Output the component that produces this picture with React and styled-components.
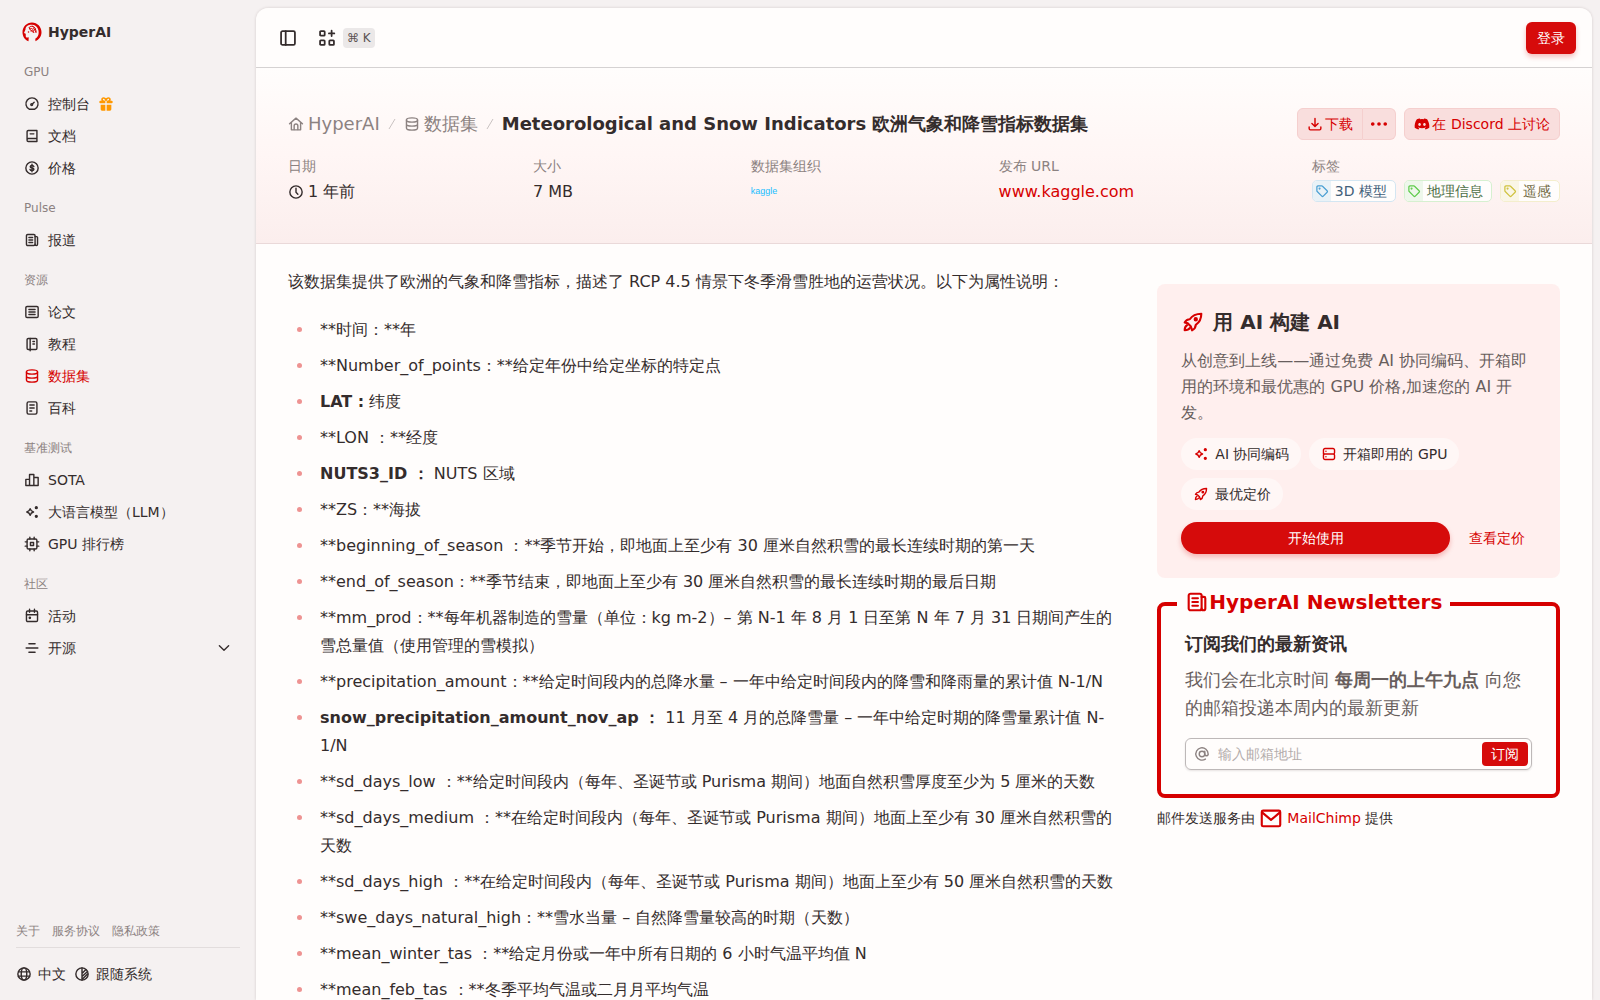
import React from 'react'
import styled, { createGlobalStyle } from 'styled-components'
import { FaDiscord } from 'react-icons/fa'

const GlobalStyle = createGlobalStyle`
    :root{
        --page:#f5f1f1;
        --panel:#fffdfc;
        --text:#342c2c;
        --muted:#8c8281;
        --soft:#685e5d;
        --red:#d60000;
        --button:#d60b0b;
        --tint:#ffefee;
    }
    *{
        box-sizing:border-box;
    }
    body{
        margin:0;
        background:var(--page);
        color:var(--text);
        font-family:"DejaVu Sans", sans-serif;
        font-size:14px;
        line-height:20px;
    }
    button, input{
        font:inherit;
    }
    a{
        color:inherit;
        text-decoration:none;
    }
`

const icons = {
    gauge: <><path d="M7.500 20.500a9.800 9.800 0 1 1 9 0z" /><circle cx="11.500" cy="13" r="1.500" /><path d="M13 11.500l2.500-2.500" /></>,
    book: <><path d="M4 18V5a2 2 0 0 1 2-2h14v18H6a2 2 0 0 1-2-2v-1a2 2 0 0 1 2-2h14" /><path d="M9 8.500h6" /></>,
    dollar: <><circle cx="12" cy="12" r="10" /><path d="M15 9.500c-.4-1.200-1.500-1.700-3-1.700-1.700 0-2.900.8-2.900 2.100 0 3 6 1.300 6 4.300 0 1.300-1.300 2.100-3.100 2.100-1.600 0-2.800-.6-3.200-1.900M12 5.800v12.400" /></>,
    news: <><rect x="3" y="3" width="14" height="18" rx="2" /><path d="M17 6.500h2.500a1.500 1.500 0 0 1 1.500 1.500v11a2 2 0 0 1-4 0M7 8h6M7 12h6M7 16h6" /></>,
    paper: <><rect x="2" y="3" width="20" height="18" rx="2" /><path d="M7 8h10M7 12h10M7 16h10" /></>,
    notebook: <><rect x="4" y="3" width="16" height="18" rx="2" /><path d="M9 3v20M13.500 8h2.500M13.500 12h2.500" /></>,
    database: <><ellipse cx="12" cy="5.500" rx="9" ry="3.500" /><path d="M3 5.500v13c0 2 4 3.500 9 3.500s9-1.500 9-3.500v-13M3 12c0 2 4 3.500 9 3.500s9-1.500 9-3.500" /></>,
    wiki: <><rect x="4" y="2" width="16" height="20" rx="2.500" /><path d="M8.500 7h7M8.500 12h7M8.500 17h3" /></>,
    bars: <path d="M2 11h6v10H2zM8 21V3h7v18zM15 8h7v13h-7" />,
    sparkles: <><path d="M9 6.500c.8 3.500 2 4.700 5.500 5.500-3.500.8-4.700 2-5.500 5.500-.8-3.500-2-4.700-5.500-5.500 3.500-.8 4.700-2 5.500-5.500z" /><circle cx="19" cy="5" r="1.500" fill="currentColor" /><circle cx="19" cy="19" r="1.500" fill="currentColor" /></>,
    chip: <><rect x="4" y="4" width="16" height="16" rx="2.500" /><rect x="9.500" y="9.500" width="5" height="5" /><path d="M8.500 1v3M15.500 1v3M8.500 20v3M15.500 20v3M1 8.500h3M1 15.500h3M20 8.500h3M20 15.500h3" /></>,
    calendar: <><rect x="3" y="4" width="18" height="17" rx="2" /><path d="M3 10h18M8 1v5M16 1v5" /><circle cx="8.500" cy="15" r="1" fill="currentColor" /></>,
    lines: <path d="M7 5h10M2.500 12h19M7 19h10" />,
    chevron: <path d="M4.500 8.500l7.500 7 7.500-7" />,
    globe: <><circle cx="12" cy="12" r="10" /><ellipse cx="12" cy="12" rx="4.500" ry="10" /><path d="M3 8.500h18M3 15.500h18" /></>,
    contrast: <><circle cx="12" cy="12" r="10" /><path d="M12 2v20M12 11l6-6M12 16l9-8M12 21l9-9" /></>,
    panel: <><rect x="3" y="3" width="18" height="18" rx="2" /><path d="M9 3v18" /></>,
    apps: <><rect x="3" y="3" width="6" height="6" rx="1" /><rect x="3" y="15" width="6" height="6" rx="1" /><rect x="15" y="15" width="6" height="6" rx="1" /><path d="M18 2.500v7M14.500 6h7" /></>,
    home: <><path d="M1.500 11.500L12 2.500l10.500 9M4.500 9.500V21.500h15V9.500" /><path d="M9 21v-6a3 3 0 0 1 6 0v6" /></>,
    clock: <><circle cx="12" cy="12" r="10" /><path d="M12 6v6.500l3 3" /></>,
    download: <path d="M12 3v12M7 11l5 5 5-5M2.500 17v2.500a2 2 0 0 0 2 2h15a2 2 0 0 0 2-2V17" />,
    more: <><circle cx="3" cy="12" r="1.500" fill="currentColor" /><circle cx="12" cy="12" r="1.500" fill="currentColor" /><circle cx="21" cy="12" r="1.500" fill="currentColor" /></>,
    tag: <><path d="M2.500 4.500a2 2 0 0 1 2-2h7a2 2 0 0 1 1.500.6l8.500 8.500a2 2 0 0 1 0 2.800L14.400 21.500a2 2 0 0 1-2.800 0l-8.500-8.500a2 2 0 0 1-.6-1.500z" /><circle cx="7.500" cy="7.500" r=".8" fill="currentColor" /></>,
    rocket: <><path d="M8.500 9C11.500 4.500 15.500 3 21 3c0 5-1.500 9-6 12-.2 3-1.300 4.800-4 6l-1.500-4.500-3-3L3 12.500C4 10.500 6 9 8.500 9z" /><circle cx="15" cy="9" r="1.200" fill="currentColor" /><path d="M5.500 15.500c-2 1-2.500 2.500-2.500 5.500 3-.2 4.500-.8 5.500-2.500" /></>,
    server: <><path d="M3 12V5.500A2.500 2.500 0 0 1 5.500 3h13A2.500 2.500 0 0 1 21 5.500v4.500a2 2 0 0 1-2 2H5a2 2 0 0 0-2 2v4.500A2.500 2.500 0 0 0 5.500 21h13a2.500 2.500 0 0 0 2.500-2.500V14a2 2 0 0 0-2-2H5a2 2 0 0 1-2-2" /><path d="M7 7.500h.1M7 16.500h.1" /></>,
    mail: <><rect x="2" y="4" width="20" height="17" rx="1.500" /><path d="M3 6.500l9 7.500 9-7.500" /></>,
    at: <><circle cx="12" cy="12" r="4.500" /><path d="M16.500 7.500V13a3 3 0 0 0 5.500 0v-1a10 10 0 1 0-4.500 8.300" /></>,
}

const Icon = ({ name, size = 16 }) => (
    <Glyph $size={size} viewBox="-1 -1 26 26" aria-hidden="true">{icons[name]}</Glyph>
)

const menu = [
    {
        title: 'GPU',
        items: [
            { icon: 'gauge', label: '控制台', gift: true },
            { icon: 'book', label: '文档' },
            { icon: 'dollar', label: '价格' },
        ],
    },
    { title: 'Pulse', items: [{ icon: 'news', label: '报道' }] },
    {
        title: '资源',
        items: [
            { icon: 'paper', label: '论文' },
            { icon: 'notebook', label: '教程' },
            { icon: 'database', label: '数据集', active: true },
            { icon: 'wiki', label: '百科' },
        ],
    },
    {
        title: '基准测试',
        items: [
            { icon: 'bars', label: 'SOTA' },
            { icon: 'sparkles', label: '大语言模型（LLM）' },
            { icon: 'chip', label: 'GPU 排行榜' },
        ],
    },
    {
        title: '社区',
        items: [
            { icon: 'calendar', label: '活动' },
            { icon: 'lines', label: '开源', more: true },
        ],
    },
]

const tags = [
    { label: '3D 模型', border: '#d3e6f2', tint: '#e9f2f7', icon: '#4a9fd3', color: '#42607a' },
    { label: '地理信息', border: '#d6f0d0', tint: '#eef7eb', icon: '#5ecb4b', color: '#4d6f46' },
    { label: '遥感', border: '#f4eecd', tint: '#faf6e6', icon: '#cfc23e', color: '#6f6840' },
]

const attributes = [
    '**时间：**年',
    '**Number_of_points：**给定年份中给定坐标的特定点',
    <><strong>LAT :</strong> 纬度</>,
    '**LON ：**经度',
    <><strong>NUTS3_ID ：</strong> NUTS 区域</>,
    '**ZS：**海拔',
    '**beginning_of_season ：**季节开始，即地面上至少有 30 厘米自然积雪的最长连续时期的第一天',
    '**end_of_season：**季节结束，即地面上至少有 30 厘米自然积雪的最长连续时期的最后日期',
    '**mm_prod：**每年机器制造的雪量（单位：kg m-2）– 第 N-1 年 8 月 1 日至第 N 年 7 月 31 日期间产生的雪总量值（使用管理的雪模拟）',
    '**precipitation_amount：**给定时间段内的总降水量 – 一年中给定时间段内的降雪和降雨量的累计值 N-1/N',
    <><strong>snow_precipitation_amount_nov_ap ：</strong> 11 月至 4 月的总降雪量 – 一年中给定时期的降雪量累计值 N-1/N</>,
    '**sd_days_low ：**给定时间段内（每年、圣诞节或 Purisma 期间）地面自然积雪厚度至少为 5 厘米的天数',
    '**sd_days_medium ：**在给定时间段内（每年、圣诞节或 Purisma 期间）地面上至少有 30 厘米自然积雪的天数',
    '**sd_days_high ：**在给定时间段内（每年、圣诞节或 Purisma 期间）地面上至少有 50 厘米自然积雪的天数',
    '**swe_days_natural_high：**雪水当量 – 自然降雪量较高的时期（天数）',
    '**mean_winter_tas ：**给定月份或一年中所有日期的 6 小时气温平均值 N',
    '**mean_feb_tas ：**冬季平均气温或二月月平均气温',
]

const Logo = () => (
    <LogoSvg viewBox="0 0 40 40" aria-hidden="true">
        <path fill="#d60000" d="M13 38.500C6 36 1 29 1 20.500 1 9.500 9.500 1 20 1s19 8.500 19 19.500c0 8-5 15-12 18l-.5-5c3-2 5.500-5 6.500-9 2-9-3-18-12.500-19C12 5 7 9 7 15l-3 7 3.500 1.500v5c0 2 1.500 3 4 2.500l2-.3z" />
        <path fill="none" stroke="#d60000" strokeWidth="2" d="M15 10c4-3 9-1 12 3M14 14c4-3 8 0 10 4M17 18c3-2 6 0 7 3M20 8c5 2 9 7 8 14M14 10c1 5 5 9 10 11M23 12l5 8" />
        <circle cx="13" cy="20" r="1.500" fill="#d60000" />
    </LogoSvg>
)

const Gift = () => (
    <GiftSvg viewBox="0 0 24 24" aria-hidden="true">
        <path d="M11 7V11H3.500A1.500 1.500 0 0 1 2 9.500v-1A1.500 1.500 0 0 1 3.500 7h1.800C3.500 3 7.500-.5 12 3.500 16.500-.5 20.500 3 18.700 7h1.800A1.500 1.500 0 0 1 22 8.500v1a1.500 1.500 0 0 1-1.500 1.500H13V7zM7.500 4.500C7 6 8 7 10.500 7 10.500 5 9 3.500 7.500 4.500zM16.500 4.500C15 3.500 13.500 5 13.500 7 16 7 17 6 16.500 4.500z" fillRule="evenodd" />
        <path d="M4 13h7v9H6a2 2 0 0 1-2-2zM13 13h7v7a2 2 0 0 1-2 2h-5z" />
    </GiftSvg>
)

const SideBar = () => (
    <Side>
        <Brand href="#"><Logo />HyperAI</Brand>
        <Menu>
            {menu.map(group => (
                <MenuGroup key={group.title}>
                    <MenuTitle>{group.title}</MenuTitle>
                    {group.items.map(item => (
                        <MenuItem key={item.label} href="#" $active={item.active}>
                            <Icon name={item.icon} />
                            <span>{item.label}</span>
                            {item.gift && <Gift />}
                            {item.more && <MenuMore><Icon name="chevron" /></MenuMore>}
                        </MenuItem>
                    ))}
                </MenuGroup>
            ))}
        </Menu>
        <SideLinks>
            <a href="#">关于</a>
            <a href="#">服务协议</a>
            <a href="#">隐私政策</a>
        </SideLinks>
        <SideSettings>
            <PlainButton><Icon name="globe" />中文</PlainButton>
            <PlainButton><Icon name="contrast" />跟随系统</PlainButton>
        </SideSettings>
    </Side>
)

const TopBar = () => (
    <Bar>
        <IconButton aria-label="Toggle sidebar"><Icon name="panel" size={20} /></IconButton>
        <IconButton aria-label="Command menu"><Icon name="apps" size={20} /><Kbd>⌘ K</Kbd></IconButton>
        <LoginButton>登录</LoginButton>
    </Bar>
)

const Slash = () => (
    <SlashSvg viewBox="0 0 8 12" aria-hidden="true"><path d="M1 11L7 1" /></SlashSvg>
)

const Hero = () => (
    <HeroBox>
        <HeroRow>
            <Crumbs aria-label="breadcrumb">
                <Crumb href="#"><Icon name="home" />HyperAI</Crumb>
                <Slash />
                <Crumb href="#"><Icon name="database" />数据集</Crumb>
                <Slash />
                <Title>Meteorological and Snow Indicators 欧洲气象和降雪指标数据集</Title>
            </Crumbs>
            <Actions>
                <ButtonGroup>
                    <SoftButton><Icon name="download" />下载</SoftButton>
                    <MoreButton aria-label="More"><Icon name="more" size={18} /></MoreButton>
                </ButtonGroup>
                <SoftButton><FaDiscord size={16} />在 Discord 上讨论</SoftButton>
            </Actions>
        </HeroRow>
        <Meta>
            <div><dt>日期</dt><dd><Icon name="clock" />1 年前</dd></div>
            <div><dt>大小</dt><dd>7 MB</dd></div>
            <div><dt>数据集组织</dt><dd><Kaggle>kaggle</Kaggle></dd></div>
            <div><dt>发布 URL</dt><dd><RedLink href="#">www.kaggle.com</RedLink></dd></div>
            <div>
                <dt>标签</dt>
                <TagList>
                    {tags.map(tag => (
                        <Tag key={tag.label} href="#" $tag={tag}>
                            <TagIcon $tag={tag}><Icon name="tag" size={14} /></TagIcon>
                            {tag.label}
                        </Tag>
                    ))}
                </TagList>
            </div>
        </Meta>
    </HeroBox>
)

const BuildCard = () => (
    <Card>
        <CardTitle><Icon name="rocket" size={24} />用 AI 构建 AI</CardTitle>
        <CardText>从创意到上线——通过免费 AI 协同编码、开箱即用的环境和最优惠的 GPU 价格,加速您的 AI 开发。</CardText>
        <Pills>
            <Pill><Icon name="sparkles" />AI 协同编码</Pill>
            <Pill><Icon name="server" />开箱即用的 GPU</Pill>
            <Pill><Icon name="rocket" />最优定价</Pill>
        </Pills>
        <CardActions>
            <StartButton>开始使用</StartButton>
            <PriceLink href="#">查看定价</PriceLink>
        </CardActions>
    </Card>
)

const Newsletter = () => (
    <form onSubmit={e => e.preventDefault()}>
        <Frame>
            <Legend><Icon name="news" size={24} />HyperAI Newsletters</Legend>
            <FrameTitle>订阅我们的最新资讯</FrameTitle>
            <FrameText>我们会在北京时间 <strong>每周一的上午九点</strong> 向您的邮箱投递本周内的最新更新</FrameText>
            <Field>
                <Icon name="at" />
                <EmailInput type="email" aria-label="输入邮箱地址" placeholder="输入邮箱地址" />
                <SubscribeButton>订阅</SubscribeButton>
            </Field>
        </Frame>
        <Provider>
            邮件发送服务由
            <MailLink href="#"><Icon name="mail" size={24} />MailChimp</MailLink>
            提供
        </Provider>
    </form>
)

const App = () => (
    <>
        <GlobalStyle />
        <Shell>
            <SideBar />
            <Main>
                <TopBar />
                <Hero />
                <Content>
                    <Article>
                        <p>该数据集提供了欧洲的气象和降雪指标，描述了 RCP 4.5 情景下冬季滑雪胜地的运营状况。以下为属性说明：</p>
                        <ul>
                            {attributes.map((item, i) => <li key={i}>{item}</li>)}
                        </ul>
                    </Article>
                    <Aside>
                        <BuildCard />
                        <Newsletter />
                    </Aside>
                </Content>
            </Main>
        </Shell>
    </>
)

export default App

const Glyph = styled.svg`
    width:${p => p.$size}px;
    height:${p => p.$size}px;
    flex:none;
    fill:none;
    stroke:currentColor;
    stroke-width:2.3;
    stroke-linecap:round;
    stroke-linejoin:round;
`
const Shell = styled.div`
    display:flex;
    height:100vh;
`

/* sidebar */
const Side = styled.aside`
    display:flex;
    flex-direction:column;
    flex:none;
    width:256px;
    padding:16px 16px 12px;
`
const Brand = styled.a`
    display:flex;
    align-items:center;
    gap:6px;
    height:32px;
    padding-left:6px;
    font-weight:bold;
`
const LogoSvg = styled.svg`
    width:20px;
    height:20px;
`
const GiftSvg = styled.svg`
    width:16px;
    height:16px;
    fill:#ff9800;
`
const Menu = styled.nav`
    display:flex;
    flex-direction:column;
    gap:8px;
    flex:1;
    padding-top:8px;
`
const MenuGroup = styled.div`
    display:flex;
    flex-direction:column;
`
const MenuTitle = styled.div`
    padding:0 8px;
    font-size:12px;
    line-height:32px;
    color:var(--muted);
`
const MenuItem = styled.a`
    display:flex;
    align-items:center;
    gap:8px;
    height:32px;
    padding:0 8px;
    color:${p => p.$active ? 'var(--red)' : 'inherit'};
`
const MenuMore = styled.span`
    display:flex;
    margin-left:auto;
`
const SideLinks = styled.div`
    display:flex;
    gap:12px;
    padding-bottom:6px;
    border-bottom:1px solid #e2dddd;
    font-size:12px;
    color:var(--muted);
`
const SideSettings = styled.div`
    display:flex;
    gap:8px;
    padding-top:12px;
`
const PlainButton = styled.button`
    display:flex;
    align-items:center;
    gap:6px;
    height:28px;
    padding:0;
    border:0;
    background:none;
    color:inherit;
`

/* panel */
const Main = styled.main`
    flex:1;
    min-width:0;
    margin:8px 8px 0 0;
    overflow:auto;
    scrollbar-width:none;
    border-radius:12px 12px 0 0;
    background:var(--panel);
    box-shadow:0 0 3px rgba(60,40,40,.18);
`
const Bar = styled.header`
    display:flex;
    align-items:center;
    gap:7px;
    height:60px;
    padding:0 16px;
    border-bottom:1px solid #d5d2d2;
`
const IconButton = styled.button`
    display:flex;
    align-items:center;
    gap:6px;
    padding:6px;
    border:0;
    background:none;
    color:inherit;
`
const Kbd = styled.kbd`
    padding:0 4px;
    border-radius:4px;
    background:#ebe8e8;
    font-family:inherit;
    font-size:12px;
    line-height:20px;
    color:#5c5353;
`
const SolidButton = styled.button`
    border:0;
    background:var(--button);
    color:#fff;
`
const LoginButton = styled(SolidButton)`
    height:32px;
    margin-left:auto;
    padding:0 11px;
    border-radius:6px;
    box-shadow:0 3px 5px rgba(214,11,11,.25);
`
const HeroBox = styled.section`
    padding:40px 32px 39px;
    border-bottom:1px solid #ead9d9;
    background:linear-gradient(var(--panel), #fff6f5 50%, #fbeeed);
`
const HeroRow = styled.div`
    display:flex;
    align-items:center;
    justify-content:space-between;
    gap:16px;
`
const Crumbs = styled.nav`
    display:flex;
    align-items:center;
    gap:8px;
    min-width:0;
    font-size:18px;
    line-height:28px;
`
const Crumb = styled.a`
    display:flex;
    align-items:center;
    gap:4px;
    color:var(--muted);
`
const SlashSvg = styled.svg`
    width:8px;
    height:12px;
    fill:none;
    stroke:#c9c2c1;
`
const Title = styled.h1`
    margin:0;
    font-size:18px;
`
const Actions = styled.div`
    display:flex;
    gap:8px;
`
const ButtonGroup = styled.div`
    display:flex;
`
const SoftButton = styled.button`
    display:flex;
    align-items:center;
    gap:2px;
    height:32px;
    padding:0 9px;
    border:1px solid #f5cfce;
    border-radius:6px;
    background:#f9dedd;
    color:var(--red);
    ${ButtonGroup} &:first-child{
        border-radius:6px 0 0 6px;
    }
`
const MoreButton = styled(SoftButton)`
    padding:0 7px;
    border-left:0;
    border-radius:0 6px 6px 0;
`
const Meta = styled.dl`
    display:flex;
    justify-content:space-between;
    margin:16px 0 0;
    dt{
        color:var(--muted);
    }
    dd{
        display:flex;
        align-items:center;
        gap:4px;
        margin:4px 0 0;
        font-size:16px;
        line-height:24px;
    }
`
const Kaggle = styled.span`
    font-family:"Liberation Sans Narrow", "Liberation Sans", sans-serif;
    font-size:9px;
    line-height:22px;
    color:#20beff;
`
const RedLink = styled.a`
    color:var(--red);
`
const TagList = styled.dd`
    && {
        gap:8px;
        font-size:14px;
        line-height:20px;
    }
`
const Tag = styled.a`
    display:flex;
    gap:4px;
    overflow:hidden;
    padding-right:8px;
    border:1px solid ${p => p.$tag.border};
    border-radius:5px;
    background:var(--panel);
    color:${p => p.$tag.color};
`
const TagIcon = styled.span`
    display:flex;
    align-items:center;
    padding:0 2px;
    background:${p => p.$tag.tint};
    color:${p => p.$tag.icon};
`

/* content */
const Content = styled.div`
    display:grid;
    grid-template-columns:repeat(3, minmax(0, 1fr));
    gap:32px;
    padding:24px 32px;
`
const Article = styled.article`
    grid-column:span 2;
    font-size:16px;
    line-height:28px;
    p{
        margin:0;
    }
    ul{
        margin:20px 0;
        padding-left:26px;
    }
    li{
        margin-bottom:8px;
        padding-left:6px;
    }
    li::marker{
        color:#ee9392;
    }
`
const Aside = styled.aside`
    display:flex;
    flex-direction:column;
    gap:12px;
    padding-top:16px;
`
const Card = styled.section`
    display:flex;
    flex-direction:column;
    gap:12px;
    padding:24px;
    border-radius:8px;
    background:var(--tint);
`
const CardTitle = styled.h2`
    display:flex;
    align-items:center;
    gap:8px;
    margin:0;
    font-size:20px;
    line-height:28px;
    svg{
        color:var(--red);
    }
`
const CardText = styled.p`
    margin:0;
    font-size:16px;
    line-height:26px;
    color:var(--soft);
`
const Pills = styled.div`
    display:flex;
    flex-wrap:wrap;
    gap:8px;
`
const Pill = styled.span`
    display:flex;
    align-items:center;
    gap:6px;
    height:32px;
    padding:0 12px;
    border-radius:16px;
    background:#fff7f6;
    svg{
        color:var(--red);
    }
`
const CardActions = styled.div`
    display:flex;
    align-items:center;
    gap:8px;
`
const StartButton = styled(SolidButton)`
    flex:1;
    height:32px;
    border-radius:16px;
    box-shadow:0 3px 5px rgba(214,11,11,.25);
`
const PriceLink = styled.a`
    padding:0 11px;
    color:var(--red);
`
const Frame = styled.fieldset`
    min-width:0;
    margin:0;
    padding:12px 24px 24px;
    border:4px solid var(--red);
    border-radius:8px;
`
const Legend = styled.legend`
    display:flex;
    align-items:center;
    margin-left:-8px;
    padding:0 8px 4px;
    font-size:20px;
    font-weight:bold;
    line-height:24px;
    color:var(--red);
`
const FrameTitle = styled.h3`
    margin:0 0 8px;
    font-size:18px;
    line-height:28px;
`
const FrameText = styled.p`
    margin:0 0 16px;
    font-size:18px;
    line-height:28px;
    color:var(--soft);
`
const Field = styled.div`
    display:flex;
    align-items:center;
    gap:8px;
    height:32px;
    padding:0 3px 0 8px;
    border:1px solid #bdb8b8;
    border-radius:6px;
    box-shadow:0 1px 2px rgba(60,40,40,.12);
    color:var(--muted);
`
const EmailInput = styled.input`
    flex:1;
    min-width:0;
    padding:0;
    border:0;
    outline:0;
    background:none;
    &::placeholder{
        color:#b3acab;
        opacity:1;
    }
`
const SubscribeButton = styled(SolidButton)`
    height:24px;
    padding:0 9px;
    border-radius:4px;
`
const Provider = styled.p`
    display:flex;
    align-items:center;
    gap:4px;
    margin:8px 0 0;
    line-height:24px;
`
const MailLink = styled.a`
    display:flex;
    align-items:center;
    gap:4px;
    color:var(--red);
`
